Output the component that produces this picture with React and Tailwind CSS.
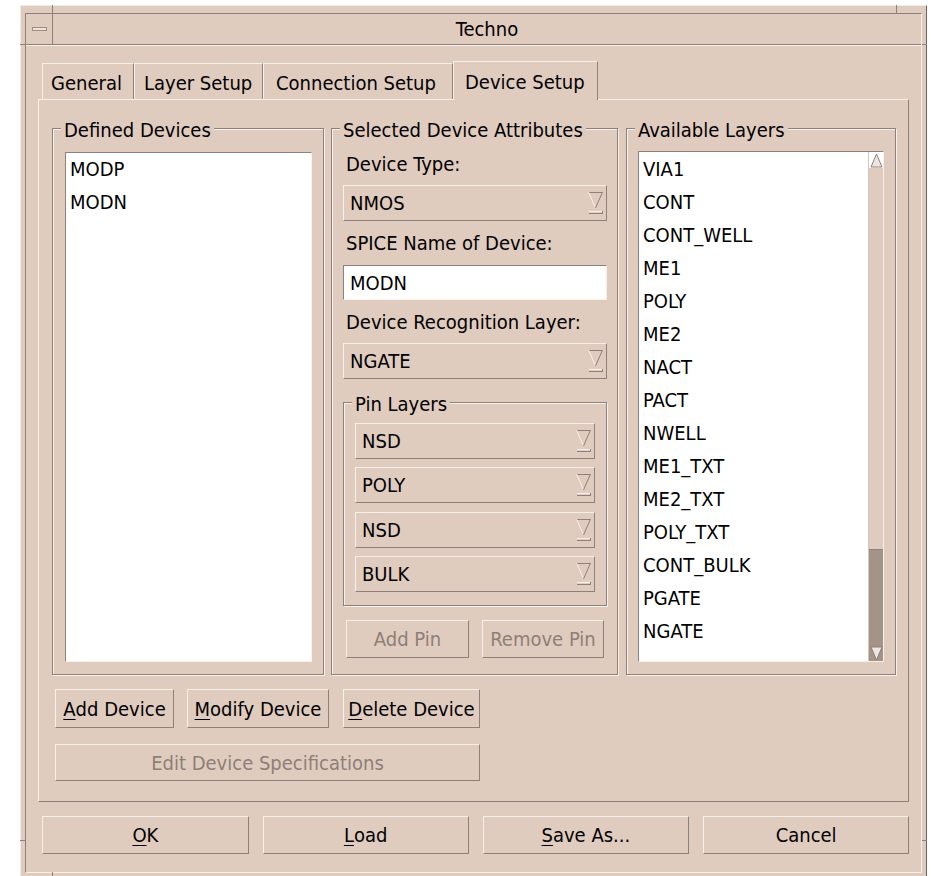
import React from 'react';

// Motif-style 3D edges
const raised =
  'border border-t-[#f8f0eb] border-l-[#f8f0eb] border-r-[#8e807a] border-b-[#8e807a]';
const sunken =
  'border border-t-[#8e807a] border-l-[#8e807a] border-r-[#f8f0eb] border-b-[#f8f0eb]';

function DropArrow() {
  return (
    <svg width="15" height="24" viewBox="0 0 15 24" className="shrink-0">
      <line x1="0.5" y1="1.5" x2="14" y2="1.5" stroke="#8e807a" />
      <line x1="0.5" y1="1" x2="7.5" y2="17" stroke="#f8f0eb" />
      <line x1="14.5" y1="1" x2="7.5" y2="17" stroke="#8e807a" />
      <line x1="1" y1="20.5" x2="14" y2="20.5" stroke="#f8f0eb" />
      <line x1="1" y1="22.5" x2="14" y2="22.5" stroke="#8e807a" />
      <line x1="14.5" y1="20" x2="14.5" y2="23" stroke="#8e807a" />
    </svg>
  );
}

function Option({ value, className = '' }) {
  return (
    <div className={`flex items-center justify-between h-[36px] pl-[6px] pr-[3px] ${raised} ${className}`}>
      <span>{value}</span>
      <DropArrow />
    </div>
  );
}

function Group({ label, className = '', children }) {
  return (
    <div
      className={`relative border border-[#8e807a] shadow-[inset_1px_1px_0_#f8f0eb,1px_1px_0_#f8f0eb] ${className}`}
    >
      <div className="absolute -top-[11px] left-[8px] px-[3px] bg-[#e0cbbf] leading-[24px] whitespace-nowrap">
        {label}
      </div>
      {children}
    </div>
  );
}

function Button({ children, className = '', disabled = false }) {
  return (
    <div
      className={`flex items-center justify-center ${raised} ${disabled ? 'text-[#8d7f78]' : ''} ${className}`}
    >
      {children}
    </div>
  );
}

function U({ children }) {
  return <span className="underline underline-offset-[3px] decoration-1">{children}</span>;
}

const layers = [
  'VIA1',
  'CONT',
  'CONT_WELL',
  'ME1',
  'POLY',
  'ME2',
  'NACT',
  'PACT',
  'NWELL',
  'ME1_TXT',
  'ME2_TXT',
  'POLY_TXT',
  'CONT_BULK',
  'PGATE',
  'NGATE',
];

function Scrollbar() {
  return (
    <div className="w-[15px] flex flex-col border-l border-[#d8c6bc]">
      <div className="h-[16px] flex items-center justify-center">
        <svg width="13" height="15" viewBox="0 0 13 15">
          <polygon points="6.5,1 12,14 1,14" fill="#efe5e0" stroke="#8e807a" strokeWidth="1" />
        </svg>
      </div>
      <div className="flex-1 flex flex-col justify-end bg-[#e0cbbf]">
        <div className="h-[96px] bg-[#a39389] border-t border-[#8e807a]" />
      </div>
      <div className="h-[16px] flex items-center justify-center bg-[#a39389]">
        <svg width="13" height="15" viewBox="0 0 13 15">
          <polygon points="1,1 12,1 6.5,14" fill="#efe5e0" stroke="#8e807a" strokeWidth="1" />
        </svg>
      </div>
    </div>
  );
}

export default function App() {
  return (
    <div className="w-[931px] h-[876px] overflow-hidden bg-white pt-[5px] pl-[20px] font-['DejaVu_Sans_Condensed','DejaVu_Sans',sans-serif] font-stretch-condensed text-[20px] leading-[24px] text-black">
      {/* window manager frame */}
      <div className="relative w-[907px] h-[873px] bg-[#e0cbbf] border border-t-[#f3ebe6] border-l-[#f3ebe6] border-r-[#6e625c] border-b-[#6e625c] pt-[7px] px-[4px] pb-[4px] flex flex-col">
        {/* resize handle separators */}
        <div className="absolute top-[-1px] left-[31px] w-[1px] h-[8px] bg-[#8e807a]" />
        <div className="absolute top-[-1px] left-[875px] w-[1px] h-[8px] bg-[#8e807a]" />
        <div className="absolute top-[38px] left-[-1px] w-[5px] h-[1px] bg-[#8e807a]" />
        <div className="absolute top-[834px] left-[-1px] w-[5px] h-[1px] bg-[#8e807a]" />
        <div className="absolute top-[38px] left-[901px] w-[5px] h-[1px] bg-[#8e807a]" />
        <div className="absolute top-[834px] left-[901px] w-[5px] h-[1px] bg-[#8e807a]" />
        <div className="absolute top-[866px] left-[31px] w-[1px] h-[6px] bg-[#8e807a]" />

        <div className={`flex-1 flex flex-col ${sunken}`}>
          {/* title bar */}
          <div className="h-[31px] flex border-b border-[#8e807a]">
            <div className="w-[27px] flex items-center justify-center border-r border-[#8e807a]">
              <div className="w-[15px] h-[4px] border border-[#9a8c85] bg-[#eee3dd]" />
            </div>
            <div className="flex-1 flex items-center justify-center">Techno</div>
          </div>

          {/* dialog body */}
          <div className="flex-1 border-t border-[#f8f0eb] px-[12px] pt-[15px]">
            {/* tabs */}
            <div className="flex items-end h-[38px] pl-[4px]">
              <div className="h-[36px] w-[92px] pl-[8px] pt-[7px] border-t border-l border-r border-t-[#f8f0eb] border-l-[#f8f0eb] border-r-[#8e807a]">
                General
              </div>
              <div className="h-[36px] w-[129px] pl-[9px] pt-[7px] border-t border-l border-r border-t-[#f8f0eb] border-l-[#f8f0eb] border-r-[#8e807a]">
                Layer Setup
              </div>
              <div className="h-[36px] w-[190px] pl-[12px] pt-[7px] border-t border-l border-r border-t-[#f8f0eb] border-l-[#f8f0eb] border-r-[#8e807a]">
                Connection Setup
              </div>
              <div className="relative z-10 h-[39px] -mb-[1px] w-[145px] pl-[11px] pt-[8px] bg-[#e0cbbf] border-t border-l border-r border-t-[#f8f0eb] border-l-[#f8f0eb] border-r-[#8e807a]">
                Device Setup
              </div>
            </div>

            {/* tab page */}
            <div className={`h-[703px] pl-[13px] pt-[28px] ${raised}`}>
              <div className="flex h-[547px]">
                {/* defined devices */}
                <Group label="Defined Devices" className="w-[272px] flex flex-col pl-[12px] pr-[11px] pt-[23px] pb-[12px]">
                  <div className={`flex-1 bg-white pl-[4px] leading-[33px] ${sunken}`}>
                    <div>MODP</div>
                    <div>MODN</div>
                  </div>
                </Group>

                {/* selected device attributes */}
                <Group
                  label="Selected Device Attributes"
                  className="ml-[7px] w-[287px] pl-[11px] pr-[10px] pt-[23px]"
                >
                  <div className="pl-[3px]">Device Type:</div>
                  <Option value="NMOS" className="mt-[9px]" />
                  <div className="pl-[3px] mt-[10px]">SPICE Name of Device:</div>
                  <div className={`mt-[10px] h-[35px] bg-white flex items-center pl-[6px] ${sunken}`}>MODN</div>
                  <div className="pl-[3px] mt-[10px]">Device Recognition Layer:</div>
                  <Option value="NGATE" className="mt-[9px]" />

                  <Group label="Pin Layers" className="mt-[23px] px-[11px] pt-[20px] pb-[13px]">
                    <Option value="NSD" />
                    <Option value="POLY" className="mt-[8px]" />
                    <Option value="NSD" className="mt-[9px]" />
                    <Option value="BULK" className="mt-[8px]" />
                  </Group>

                  <div className="flex mt-[14px] pl-[3px]">
                    <Button disabled className="w-[123px] h-[38px]">
                      Add Pin
                    </Button>
                    <Button disabled className="ml-[13px] w-[122px] h-[38px]">
                      Remove Pin
                    </Button>
                  </div>
                </Group>

                {/* available layers */}
                <Group label="Available Layers" className="ml-[8px] w-[270px] flex flex-col pl-[11px] pr-[11px] pt-[22px] pb-[12px]">
                  <div className={`flex-1 flex bg-white ${sunken}`}>
                    <div className="flex-1 pl-[4px] pt-[1px] leading-[33px]">
                      {layers.map((l) => (
                        <div key={l}>{l}</div>
                      ))}
                    </div>
                    <Scrollbar />
                  </div>
                </Group>
              </div>

              {/* device actions */}
              <div className="flex mt-[14px] ml-[3px]">
                <Button className="w-[119px] h-[39px]">
                  <U>A</U>dd Device
                </Button>
                <Button className="ml-[13px] w-[142px] h-[39px]">
                  <U>M</U>odify Device
                </Button>
                <Button className="ml-[14px] w-[137px] h-[39px]">
                  <U>D</U>elete Device
                </Button>
              </div>
              <Button disabled className="mt-[16px] ml-[3px] w-[425px] h-[37px]">
                Edit Device Specifications
              </Button>
            </div>

            {/* dialog buttons */}
            <div className="flex mt-[14px] pl-[4px] gap-[14px]">
              <Button className="w-[207px] h-[38px]">
                <U>O</U>K
              </Button>
              <Button className="w-[206px] h-[38px]">
                <U>L</U>oad
              </Button>
              <Button className="w-[207px] h-[38px]">
                <U>S</U>ave As...
              </Button>
              <Button className="w-[206px] h-[38px]">Cancel</Button>
            </div>
          </div>
        </div>
      </div>
    </div>
  );
}
